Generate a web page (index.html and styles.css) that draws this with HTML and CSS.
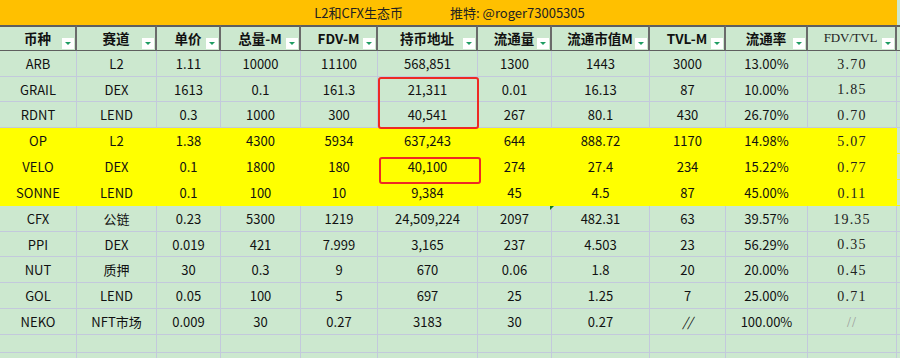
FILE: index.html
```html
<!DOCTYPE html>
<html lang="zh">
<head>
<meta charset="utf-8">
<title>L2和CFX生态币</title>
<link rel="stylesheet" href="styles.css">
</head>
<body>
<div class="sheet">
  <div class="title"><span>L2和CFX生态币</span><span>推特: @roger73005305</span></div>
  <div class="row head">
    <div class="c">币种<i class="dd"></i></div>
    <div class="c">赛道<i class="dd"></i></div>
    <div class="c">单价<i class="dd"></i></div>
    <div class="c">总量-M<i class="dd"></i></div>
    <div class="c">FDV-M<i class="dd"></i></div>
    <div class="c">持币地址<i class="dd"></i></div>
    <div class="c">流通量<i class="dd"></i></div>
    <div class="c">流通市值M<i class="dd"></i></div>
    <div class="c">TVL-M<i class="dd"></i></div>
    <div class="c">流通率<i class="dd"></i></div>
    <div class="c serif-h">FDV/TVL<i class="dd"></i></div>
    <div class="c pad"></div>
  </div>
  <div class="row h26"><div class="c">ARB</div><div class="c">L2</div><div class="c">1.11</div><div class="c">10000</div><div class="c">11100</div><div class="c">568,851</div><div class="c">1300</div><div class="c">1443</div><div class="c">3000</div><div class="c">13.00%</div><div class="c serif">3.70</div><div class="c pad"></div></div>
  <div class="row h25"><div class="c">GRAIL</div><div class="c">DEX</div><div class="c">1613</div><div class="c">0.1</div><div class="c">161.3</div><div class="c">21,311</div><div class="c">0.01</div><div class="c">16.13</div><div class="c">87</div><div class="c">10.00%</div><div class="c serif">1.85</div><div class="c pad"></div></div>
  <div class="row h26"><div class="c">RDNT</div><div class="c">LEND</div><div class="c">0.3</div><div class="c">1000</div><div class="c">300</div><div class="c">40,541</div><div class="c">267</div><div class="c">80.1</div><div class="c">430</div><div class="c">26.70%</div><div class="c serif">0.70</div><div class="c pad"></div></div>
  <div class="row h26 yellow"><div class="c">OP</div><div class="c">L2</div><div class="c">1.38</div><div class="c">4300</div><div class="c">5934</div><div class="c">637,243</div><div class="c">644</div><div class="c">888.72</div><div class="c">1170</div><div class="c">14.98%</div><div class="c serif">5.07</div><div class="c pad"></div></div>
  <div class="row h26 yellow"><div class="c">VELO</div><div class="c">DEX</div><div class="c">0.1</div><div class="c">1800</div><div class="c">180</div><div class="c">40,100</div><div class="c">274</div><div class="c">27.4</div><div class="c">234</div><div class="c">15.22%</div><div class="c serif">0.77</div><div class="c pad"></div></div>
  <div class="row h26 yellow"><div class="c">SONNE</div><div class="c">LEND</div><div class="c">0.1</div><div class="c">100</div><div class="c">10</div><div class="c">9,384</div><div class="c">45</div><div class="c">4.5</div><div class="c">87</div><div class="c">45.00%</div><div class="c serif">0.11</div><div class="c pad"></div></div>
  <div class="row h26"><div class="c">CFX</div><div class="c">公链</div><div class="c">0.23</div><div class="c">5300</div><div class="c">1219</div><div class="c">24,509,224</div><div class="c">2097</div><div class="c">482.31<i class="note"></i></div><div class="c">63</div><div class="c">39.57%</div><div class="c serif">19.35</div><div class="c pad"></div></div>
  <div class="row h25"><div class="c">PPI</div><div class="c">DEX</div><div class="c">0.019</div><div class="c">421</div><div class="c">7.999</div><div class="c">3,165</div><div class="c">237</div><div class="c">4.503</div><div class="c">23</div><div class="c">56.29%</div><div class="c serif">0.35</div><div class="c pad"></div></div>
  <div class="row h26"><div class="c">NUT</div><div class="c">质押</div><div class="c">30</div><div class="c">0.3</div><div class="c">9</div><div class="c">670</div><div class="c">0.06</div><div class="c">1.8</div><div class="c">20</div><div class="c">20.00%</div><div class="c serif">0.45</div><div class="c pad"></div></div>
  <div class="row h26"><div class="c">GOL</div><div class="c">LEND</div><div class="c">0.05</div><div class="c">100</div><div class="c">5</div><div class="c">697</div><div class="c">25</div><div class="c">1.25</div><div class="c">7</div><div class="c">25.00%</div><div class="c serif">0.71</div><div class="c pad"></div></div>
  <div class="row h26"><div class="c">NEKO</div><div class="c">NFT市场</div><div class="c">0.009</div><div class="c">30</div><div class="c">0.27</div><div class="c">3183</div><div class="c">30</div><div class="c">0.27</div><div class="c italic">//</div><div class="c">100.00%</div><div class="c serif grey">//</div><div class="c pad"></div></div>
  <div class="row h18"><div class="c"></div><div class="c"></div><div class="c"></div><div class="c"></div><div class="c"></div><div class="c"></div><div class="c"></div><div class="c"></div><div class="c"></div><div class="c"></div><div class="c"></div><div class="c pad"></div></div>
  <div class="row h26"><div class="c"></div><div class="c"></div><div class="c"></div><div class="c"></div><div class="c"></div><div class="c"></div><div class="c"></div><div class="c"></div><div class="c"></div><div class="c"></div><div class="c"></div><div class="c pad"></div></div>
  <div class="mark mark1"></div>
  <div class="mark mark2"></div>
</div>
</body>
</html>
```
FILE: styles.css
```css
html, body {
  margin: 0;
  padding: 0;
  background: #cce8cf;
}
.sheet {
  position: relative;
  width: 900px;
  height: 358px;
  overflow: hidden;
  background: #cce8cf;
  font-family: "Noto Sans CJK SC", "Noto Sans", sans-serif;
  font-size: 13px;
  color: #111;
}
.title {
  width: 897px;
  height: 25px;
  background: #ffc000;
  display: flex;
  justify-content: center;
  align-items: center;
  gap: 47px;
  font-size: 13px;
  color: #222;
  box-sizing: border-box;
  padding-left: 2px;
}
.row {
  display: grid;
  grid-template-columns: 77px 80px 64px 80px 77px 100px 74px 98px 76px 82px 89px 3px;
}
.h26 { height: 26px; }
.h25 { height: 25px; }
.h18 { height: 18px; }
.c {
  position: relative;
  box-sizing: border-box;
  border-right: 1px solid #c3c9dc;
  border-bottom: 1px solid #c3c9dc;
  display: flex;
  align-items: center;
  justify-content: center;
  white-space: nowrap;
}
.c.pad {
  border-right: none;
}
.head {
  height: 26px;
}
.head .c {
  border-top: 2px solid #5e5e5e;
  border-bottom: 1px solid #5e5e5e;
  border-right: 2px solid #6a6a6a;
  font-weight: bold;
  font-size: 13.5px;
  color: #111;
  padding-bottom: 1px;
}
.head .c.pad {
  border-right: none;
  border-top-color: #5e5e5e;
}
.head .c.serif-h {
  font-family: "Liberation Serif", "Times New Roman", serif;
  font-weight: normal;
  font-size: 13px;
  letter-spacing: -0.2px;
  color: #222;
  padding-right: 2px;
}
.dd {
  position: absolute;
  right: 1px;
  bottom: 1px;
  width: 12px;
  height: 11px;
  background: #fff;
}
.dd::after {
  content: "";
  position: absolute;
  left: 3px;
  top: 4px;
  border-left: 3px solid transparent;
  border-right: 3px solid transparent;
  border-top: 3px solid #1f9d63;
}
.serif {
  font-family: "Liberation Serif", "Times New Roman", serif;
  font-size: 14px;
  letter-spacing: 1.2px;
  padding-top: 2px;
  color: #222;
}
.grey {
  color: #9a9a9a;
}
.italic {
  font-style: italic;
}
.yellow .c {
  background: #ffff00;
  border-color: #ffff00;
}
.yellow .c.pad {
  background: #cce8cf;
}
.note {
  position: absolute;
  left: -2px;
  top: 0;
  width: 0;
  height: 0;
  border-top: 4px solid #1a7a1a;
  border-right: 4px solid transparent;
}
.mark {
  position: absolute;
  border: 2px solid #ee2a24;
  border-radius: 3px;
  box-sizing: border-box;
}
.mark1 {
  left: 378px;
  top: 77px;
  width: 101px;
  height: 52px;
}
.mark2 {
  left: 379px;
  top: 157px;
  width: 102px;
  height: 27px;
}
```
